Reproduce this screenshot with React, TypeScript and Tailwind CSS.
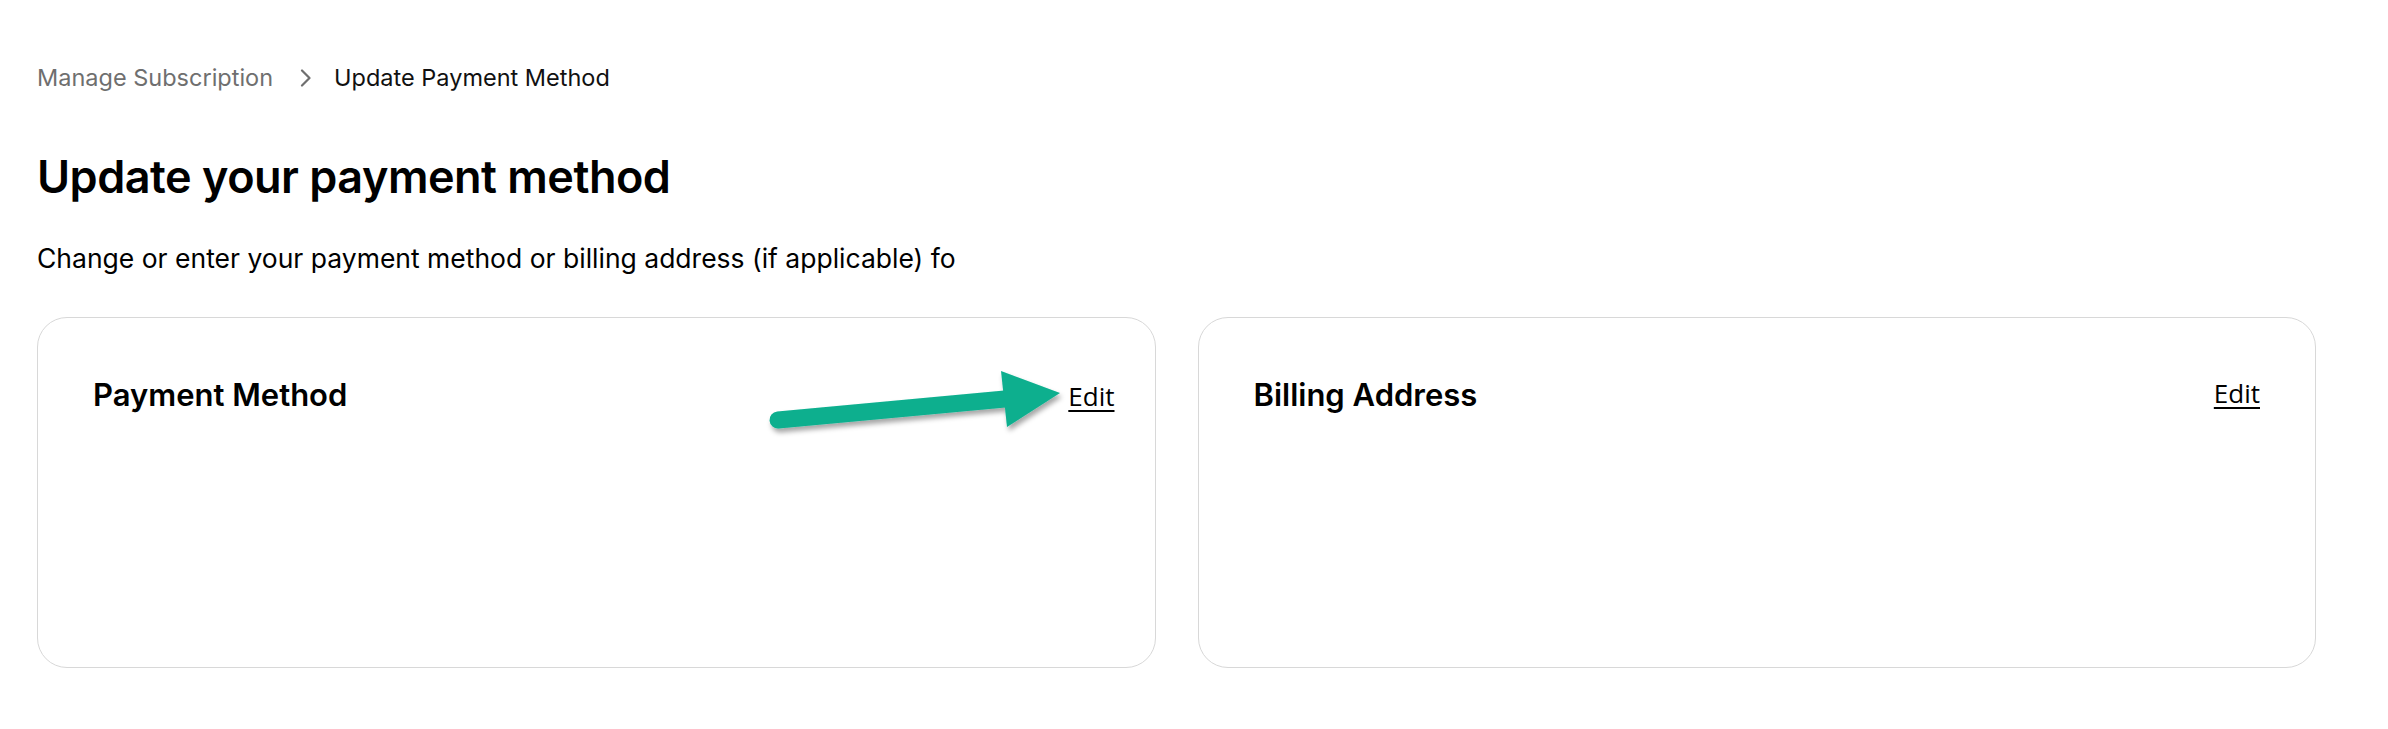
export default function App() {
    return (
        <div className="min-h-screen bg-white pl-[37px] pr-[72px] pt-[63px] font-['Inter',sans-serif] text-[#111]">
            {/* Breadcrumb */}
            <nav className="flex items-center text-[23.5px] leading-[30px]">
                <span className="text-[#6f6f6f]">Manage Subscription</span>
                <svg className="ml-[27px] mr-[22px] h-[18px] w-[12px]" viewBox="0 0 12 18" fill="none">
                    <polyline points="2,1.5 9.5,9 2,16.5" stroke="#6f6f6f" strokeWidth="2.2" strokeLinecap="round" strokeLinejoin="round" />
                </svg>
                <span className="text-[#111]">Update Payment Method</span>
            </nav>

            <h1 className="mt-[58px] text-[45px] font-semibold leading-[52px] tracking-[-0.5px] text-black">
                Update your payment method
            </h1>

            <p className="mt-[38px] whitespace-nowrap text-[26.5px] leading-[34px] text-black">
                Change or enter your payment method or billing address (if applicable) fo
            </p>

            {/* Cards */}
            <div className="mt-[42px] grid grid-cols-2 gap-[42px]">
                <div className="relative h-[351px] rounded-[30px] border border-[#d8d8d8] px-[55px] pt-[58px]">
                    <div className="flex items-start justify-between">
                        <h2 className="text-[31px] font-semibold leading-[38px] text-black">Payment Method</h2>
                        <a className="relative left-[15px] top-[3px] font-['Open_Sans',sans-serif] text-[26px] leading-[34px] text-black underline underline-offset-[4px]">
                            Edit
                        </a>
                    </div>
                    {/* annotation arrow */}
                    <svg className="absolute left-[720px] top-[40px] h-[110px] w-[360px] overflow-visible" viewBox="0 0 360 110" fill="none">
                        <defs>
                            <filter id="arrowShadow" x="-20%" y="-50%" width="140%" height="200%">
                                <feDropShadow dx="2" dy="4" stdDeviation="2.5" floodColor="#000" floodOpacity="0.35" />
                            </filter>
                        </defs>
                        <g filter="url(#arrowShadow)">
                            <line x1="20" y1="62" x2="247" y2="41" stroke="#0aaf8e" strokeWidth="17" strokeLinecap="round" />
                            <polygon points="243,13 302,35 249,69" fill="#0aaf8e" />
                        </g>
                    </svg>
                </div>

                <div className="h-[351px] rounded-[30px] border border-[#d8d8d8] px-[55px] pt-[58px]">
                    <div className="flex items-start justify-between">
                        <h2 className="text-[31px] font-semibold leading-[38px] text-black">Billing Address</h2>
                        <a className="relative top-0 font-['Open_Sans',sans-serif] text-[26px] leading-[34px] text-black underline underline-offset-[4px]">
                            Edit
                        </a>
                    </div>
                </div>
            </div>
        </div>
    )
}
